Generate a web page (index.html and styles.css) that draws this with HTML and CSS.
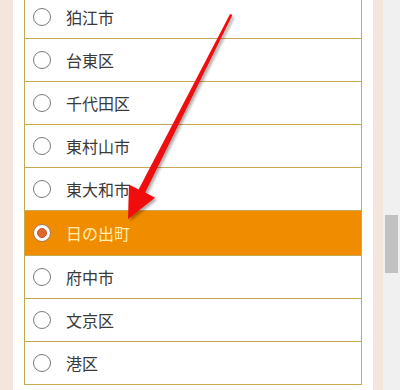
FILE: index.html
```html
<!DOCTYPE html>
<html lang="ja">
<head>
<meta charset="utf-8">
<link rel="stylesheet" href="styles.css">
</head>
<body>
<div class="page">
  <div class="side side-left"></div>
  <div class="content">
    <ul class="list">
      <li class="row"><span class="radio"></span><span class="label">狛江市</span></li>
      <li class="row"><span class="radio"></span><span class="label">台東区</span></li>
      <li class="row"><span class="radio"></span><span class="label">千代田区</span></li>
      <li class="row"><span class="radio"></span><span class="label">東村山市</span></li>
      <li class="row"><span class="radio"></span><span class="label">東大和市</span></li>
      <li class="row selected"><span class="radio"></span><span class="label">日の出町</span></li>
      <li class="row"><span class="radio"></span><span class="label">府中市</span></li>
      <li class="row"><span class="radio"></span><span class="label">文京区</span></li>
      <li class="row"><span class="radio"></span><span class="label">港区</span></li>
    </ul>
  </div>
  <div class="side side-right"></div>
  <div class="scrollbar"><div class="thumb"></div></div>
  <svg class="arrow" width="400" height="390" viewBox="0 0 400 390">
    <defs>
      <filter id="sh" x="-20%" y="-20%" width="140%" height="140%">
        <feDropShadow dx="2" dy="2" stdDeviation="1.6" flood-color="#000" flood-opacity="0.35"/>
      </filter>
    </defs>
    <path filter="url(#sh)" fill="#f00b0b" d="M232.2,15.6 L145.2,192.6 L155,197.8 L128,219 L129,184.4 L138.6,189.6 L229.8,14.4 Q231.2,13.4 232.2,15.6 Z"/>
  </svg>
</div>
</body>
</html>
```
FILE: styles.css
```css
html, body {
  margin: 0;
  padding: 0;
  background: #ffffff;
}
.page {
  position: relative;
  width: 400px;
  height: 390px;
  overflow: hidden;
  display: flex;
  font-family: "Noto Sans CJK JP", "Noto Sans", sans-serif;
}
.side {
  flex: none;
  background: #f4e6dd;
}
.side-left {
  width: 13px;
}
.side-right {
  width: 10px;
}
.content {
  flex: none;
  width: 338px;
  padding: 0 11px;
  background: #ffffff;
}
.list {
  list-style: none;
  margin: -4px 0 0 0;
  padding: 0;
  border-left: 1px solid #c8a950;
  border-right: 1px solid #c8a950;
}
.row {
  height: 42px;
  border-bottom: 1px solid #c8a950;
  display: flex;
  align-items: center;
  padding-left: 8px;
  background: #ffffff;
}
.row.selected {
  height: 44px;
  background: #f08c00;
}
.radio {
  flex: none;
  width: 16px;
  height: 16px;
  border: 1px solid #7a7a7a;
  border-radius: 50%;
  background: #ffffff;
  box-sizing: content-box;
  display: flex;
  align-items: center;
  justify-content: center;
}
.selected .radio {
  border-color: #9a7a5a;
}
.selected .radio::after {
  content: "";
  width: 8px;
  height: 8px;
  border-radius: 50%;
  background: #e2652a;
  border: 1px solid #c2552a;
}
.label {
  margin-left: 15px;
  font-size: 16px;
  color: #3a3a3a;
  line-height: 1;
}
.selected .label {
  color: #ffeeb0;
}
.scrollbar {
  flex: none;
  width: 17px;
  background: #f0f0f0;
  display: flex;
  justify-content: center;
  padding-top: 215px;
  box-sizing: border-box;
}
.thumb {
  width: 13px;
  height: 58px;
  background: #c1c1c1;
}
.arrow {
  position: absolute;
  left: 0;
  top: 0;
  pointer-events: none;
}
```
